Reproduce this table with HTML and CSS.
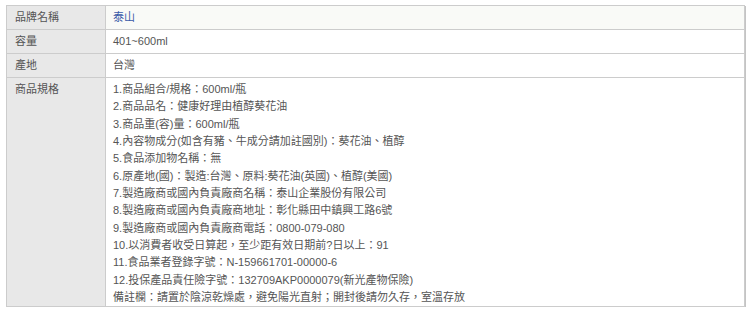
FILE: index.html
```html
<!DOCTYPE html>
<html lang="zh-Hant">
<head>
<meta charset="utf-8">
<link rel="stylesheet" href="styles.css">
</head>
<body>
<table class="spec">
  <tr class="first">
    <th>品牌名稱</th>
    <td><a class="brand" href="#">泰山</a></td>
  </tr>
  <tr>
    <th>容量</th>
    <td>401~600ml</td>
  </tr>
  <tr>
    <th>產地</th>
    <td>台灣</td>
  </tr>
  <tr class="multi">
    <th>商品規格</th>
    <td>
      <div class="line">1.商品組合/規格：600ml/瓶</div>
      <div class="line">2.商品品名：健康好理由植醇葵花油</div>
      <div class="line">3.商品重(容)量：600ml/瓶</div>
      <div class="line">4.內容物成分(如含有豬、牛成分請加註國別)：葵花油、植醇</div>
      <div class="line">5.食品添加物名稱：無</div>
      <div class="line">6.原產地(國)：製造:台灣、原料:葵花油(英國)、植醇(美國)</div>
      <div class="line">7.製造廠商或國內負責廠商名稱：泰山企業股份有限公司</div>
      <div class="line">8.製造廠商或國內負責廠商地址：彰化縣田中鎮興工路6號</div>
      <div class="line">9.製造廠商或國內負責廠商電話：0800-079-080</div>
      <div class="line">10.以消費者收受日算起，至少距有效日期前?日以上：91</div>
      <div class="line">11.食品業者登錄字號：N-159661701-00000-6</div>
      <div class="line">12.投保產品責任險字號：132709AKP0000079(新光產物保險)</div>
      <div class="line">備註欄：請置於陰涼乾燥處，避免陽光直射；開封後請勿久存，室溫存放</div>
    </td>
  </tr>
</table>
</body>
</html>
```
FILE: styles.css
```css
html, body {
  margin: 0;
  padding: 0;
  background: #ffffff;
}
body {
  padding: 5px 0 0 6px;
  font-family: "Liberation Sans", "Noto Sans CJK TC", sans-serif;
  font-size: 11px;
  color: #555555;
  text-spacing-trim: space-all;
}
.spec {
  border-collapse: collapse;
  width: 739px;
  box-shadow: 1px 1px 0 #c4c4c4;
}
.spec th,
.spec td {
  border: 1px solid #cccccc;
  text-align: left;
  font-weight: normal;
  vertical-align: top;
  padding: 0 7px;
  height: 23px;
  line-height: 23px;
}
.spec th {
  width: 83px;
  background: #e8e8e8;
  padding-left: 8px;
}
.spec td {
  background: #ffffff;
  padding-left: 7px;
}
.spec .first td {
  background: #f9faf7;
}
.brand {
  color: #3b5ba8;
  text-decoration: none;
}
.spec .multi th {
  line-height: 17px;
  padding-top: 3px;
}
.spec .multi td {
  line-height: 17.33px;
  padding-top: 3px;
  padding-bottom: 0;
}
```
